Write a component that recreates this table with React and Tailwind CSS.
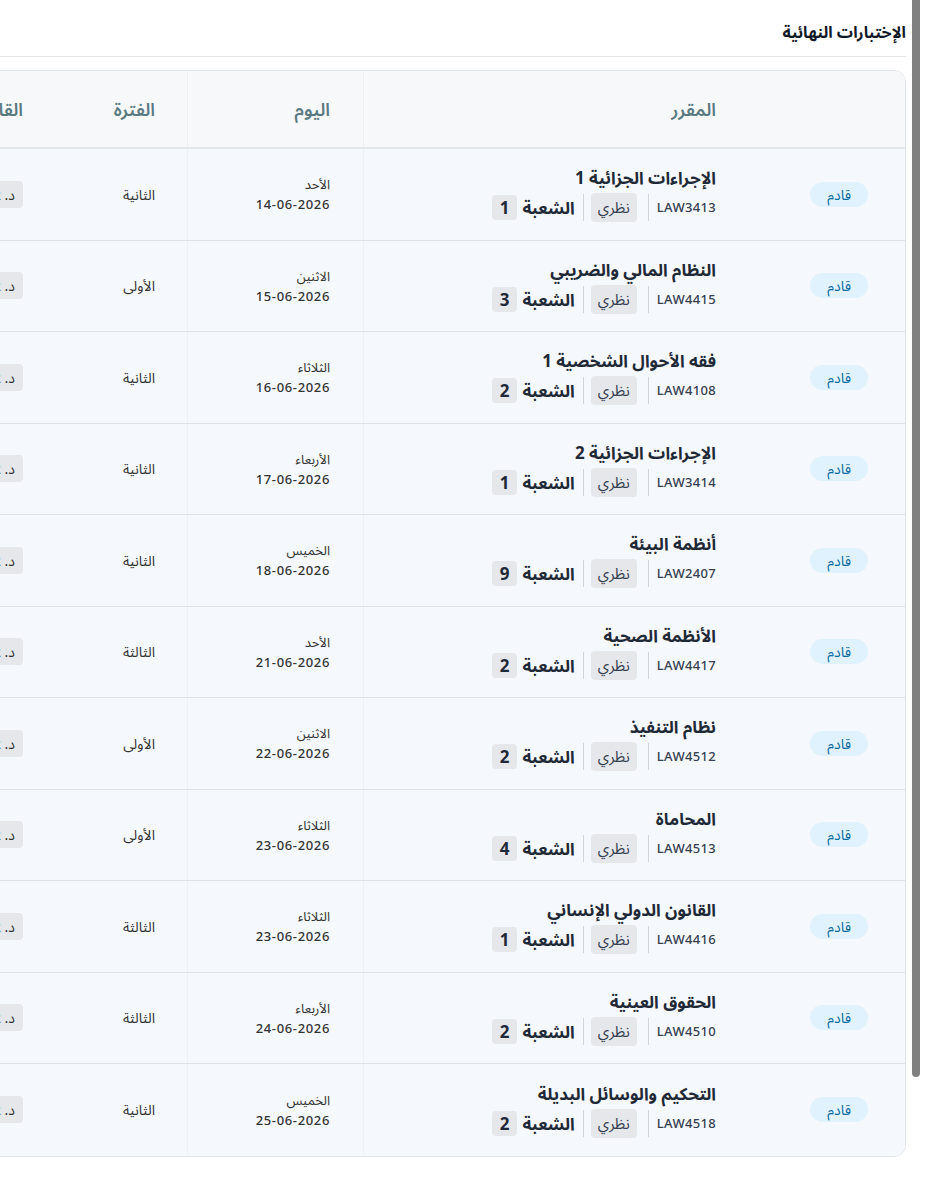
import React from 'react';

const exams = [
  { name: 'الإجراءات الجزائية 1', code: 'LAW3413', section: 1, day: 'الأحد', date: '14-06-2026', period: 'الثانية' },
  { name: 'النظام المالي والضريبي', code: 'LAW4415', section: 3, day: 'الاثنين', date: '15-06-2026', period: 'الأولى' },
  { name: 'فقه الأحوال الشخصية 1', code: 'LAW4108', section: 2, day: 'الثلاثاء', date: '16-06-2026', period: 'الثانية' },
  { name: 'الإجراءات الجزائية 2', code: 'LAW3414', section: 1, day: 'الأربعاء', date: '17-06-2026', period: 'الثانية' },
  { name: 'أنظمة البيئة', code: 'LAW2407', section: 9, day: 'الخميس', date: '18-06-2026', period: 'الثانية' },
  { name: 'الأنظمة الصحية', code: 'LAW4417', section: 2, day: 'الأحد', date: '21-06-2026', period: 'الثالثة' },
  { name: 'نظام التنفيذ', code: 'LAW4512', section: 2, day: 'الاثنين', date: '22-06-2026', period: 'الأولى' },
  { name: 'المحاماة', code: 'LAW4513', section: 4, day: 'الثلاثاء', date: '23-06-2026', period: 'الأولى' },
  { name: 'القانون الدولي الإنساني', code: 'LAW4416', section: 1, day: 'الثلاثاء', date: '23-06-2026', period: 'الثالثة' },
  { name: 'الحقوق العينية', code: 'LAW4510', section: 2, day: 'الأربعاء', date: '24-06-2026', period: 'الثالثة' },
  { name: 'التحكيم والوسائل البديلة', code: 'LAW4518', section: 2, day: 'الخميس', date: '25-06-2026', period: 'الثانية' },
];

const cols = 'grid grid-cols-[157px_385px_176px_132px_250px]';

function ExamRow({ exam }) {
  return (
    <div className={`${cols} h-[91.5px] border-b border-[#dfe3e8] bg-[#f5f8fc] last:border-b-0`}>
      {/* status */}
      <div className="flex items-center pr-[37px]">
        <span className="rounded-full bg-[#e0f2fe] px-[17px] py-[2px] text-[14px] text-[#0b6aa2]">قادم</span>
      </div>

      {/* course */}
      <div className="flex flex-col justify-center pr-[32px] border-l border-[#eef1f5]">
        <div className="text-[17px] font-bold leading-[24px] text-[#1f2937]">{exam.name}</div>
        <div className="mt-[3px] flex items-center">
          <span className="text-[13px] font-medium tracking-wide text-[#374151]">{exam.code}</span>
          <span className="mr-[8px] h-[27px] w-px bg-[#d1d5db]" />
          <span className="mr-[11px] rounded bg-[#e5e7eb] px-[7px] py-[2px] text-[15px] leading-[25px] text-[#374151]">نظري</span>
          <span className="mr-[7px] h-[27px] w-px bg-[#d1d5db]" />
          <span className="mr-[8px] text-[17px] font-bold text-[#1f2937]">الشعبة</span>
          <span className="mr-[5px] rounded bg-[#e5e7eb] px-[8px] text-[17px] font-bold leading-[25px] text-[#1f2937]">{exam.section}</span>
        </div>
      </div>

      {/* day */}
      <div className="flex flex-col justify-center pr-[33px] border-l border-[#eef1f5]">
        <div className="text-[13px] leading-[20px] text-[#333]">{exam.day}</div>
        <div className="text-[13px] font-medium tracking-wider leading-[20px] text-[#333]">{exam.date}</div>
      </div>

      {/* period */}
      <div className="flex items-center pr-[32px]">
        <span className="text-[14px] text-[#333]">{exam.period}</span>
      </div>

      {/* hall */}
      <div className="flex items-center pr-[32px]">
        <span className="rounded bg-[#e5e7eb] px-[8px] py-[3px] text-[14px] text-[#333]">د. 102 - مبنى 4</span>
      </div>
    </div>
  );
}

export default function App() {
  return (
    <div dir="ltr" className="flex min-h-screen bg-white" style={{ fontFamily: '"Noto Sans", "Noto Sans Arabic", "DejaVu Sans", sans-serif' }}>
      <div dir="rtl" className="w-[906px] overflow-hidden">
        {/* Title */}
        <div className="h-[57px] border-b border-[#e5e7eb] flex items-center pt-[8px]">
          <h2 className="text-[16px] font-bold text-[#111827]">الإختبارات النهائية</h2>
        </div>

        {/* Table card */}
        <div className="mt-[13px] w-[1100px] overflow-hidden rounded-xl border border-[#e2e5e9]">
          <div className={`${cols} h-[78px] border-b-2 border-[#e3e6ea] bg-[#f7f8f9] text-[18px] font-semibold text-[#5a7a82]`}>
            <div />
            <div className="flex items-center pr-[32px] border-l border-[#eef0f2]">المقرر</div>
            <div className="flex items-center pr-[33px] border-l border-[#eef0f2]">اليوم</div>
            <div className="flex items-center pr-[32px]">الفترة</div>
            <div className="flex items-center pr-[32px]">القاعة</div>
          </div>
          {exams.map((exam) => (
            <ExamRow key={exam.code} exam={exam} />
          ))}
        </div>
      </div>

      {/* page scrollbar */}
      <div className="flex-1 flex justify-center">
        <div className="w-[8px] h-[1077px] rounded-b-full bg-[#808080] mr-[1px]" />
      </div>
    </div>
  );
}
